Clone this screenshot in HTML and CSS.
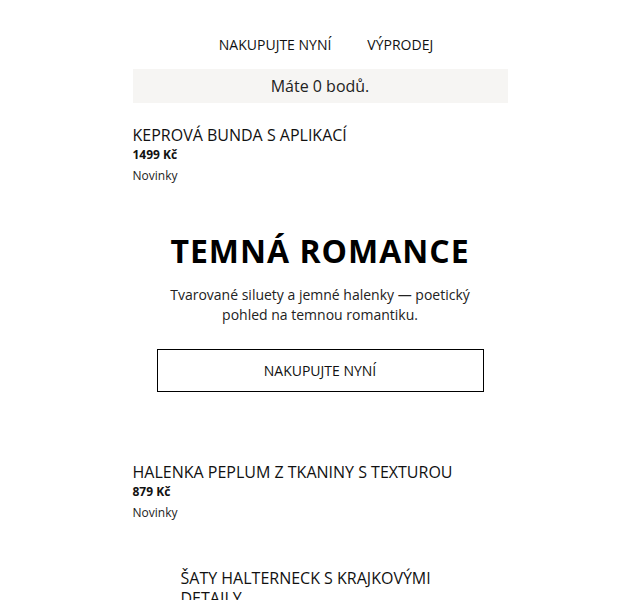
FILE: index.html
```html
<!DOCTYPE html>
<html lang="cs">
<head>
<meta charset="utf-8">
<link rel="stylesheet" href="styles.css">
</head>
<body>
<div class="page">
  <nav class="nav">
    <a class="nav-link">NAKUPUJTE NYNÍ</a>
    <a class="nav-link">VÝPRODEJ</a>
  </nav>
  <div class="points">Máte 0 bodů.</div>
  <div class="product">
    <div class="p-title">KEPROVÁ BUNDA S APLIKACÍ</div>
    <div class="p-price">1499 Kč</div>
    <div class="p-tag">Novinky</div>
  </div>
  <section class="hero">
    <h1 class="hero-title">TEMNÁ ROMANCE</h1>
    <p class="hero-text">Tvarované siluety a jemné halenky — poetický pohled na temnou romantiku.</p>
    <a class="hero-btn">NAKUPUJTE NYNÍ</a>
  </section>
  <div class="product product-2">
    <div class="p-title">HALENKA PEPLUM Z TKANINY S TEXTUROU</div>
    <div class="p-price">879 Kč</div>
    <div class="p-tag">Novinky</div>
  </div>
  <div class="product product-3">
    <div class="p-title">ŠATY HALTERNECK S KRAJKOVÝMI DETAILY</div>
  </div>
</div>
</body>
</html>
```
FILE: styles.css
```css
html, body {
  margin: 0;
  padding: 0;
  background: #fff;
}
body {
  font-family: "Open Sans", "Noto Sans", sans-serif;
  color: #111;
}
.page {
  width: 375px;
  margin: 0 auto;
  padding-top: 35px;
}
.nav {
  display: flex;
  justify-content: center;
  gap: 36px;
  padding-left: 12px;
  height: 20px;
  line-height: 20px;
  font-size: 14px;
}
.nav-link {
  color: #111;
  text-decoration: none;
}
.points {
  margin-top: 14px;
  height: 34px;
  line-height: 34px;
  background: #f6f5f3;
  text-align: center;
  font-size: 16px;
  color: #222;
}
.product {
  margin-top: 21px;
}
.p-title {
  font-size: 16px;
  line-height: 22px;
  color: #111;
}
.p-price {
  font-size: 12px;
  font-weight: 700;
  line-height: 16px;
  margin-top: 1px;
}
.p-tag {
  font-size: 12px;
  line-height: 18px;
  margin-top: 4px;
  color: #222;
}
.hero {
  margin-top: 46px;
  text-align: center;
  display: flex;
  flex-direction: column;
  align-items: center;
}
.hero-title {
  margin: 0;
  font-size: 32px;
  line-height: 40px;
  font-weight: 700;
  letter-spacing: 1px;
  color: #000;
}
.hero-text {
  margin: 14px 0 0;
  width: 320px;
  font-size: 14px;
  line-height: 20px;
  color: #222;
}
.hero-btn {
  margin-top: 24px;
  box-sizing: border-box;
  width: 327px;
  height: 43px;
  line-height: 41px;
  border: 1px solid #000;
  font-size: 14px;
  color: #111;
}
.product-2 {
  margin-top: 69px;
}
.product-3 {
  margin-top: 46px;
  padding: 0 48px;
}
.product-3 .p-title {
  line-height: 20px;
}
```
